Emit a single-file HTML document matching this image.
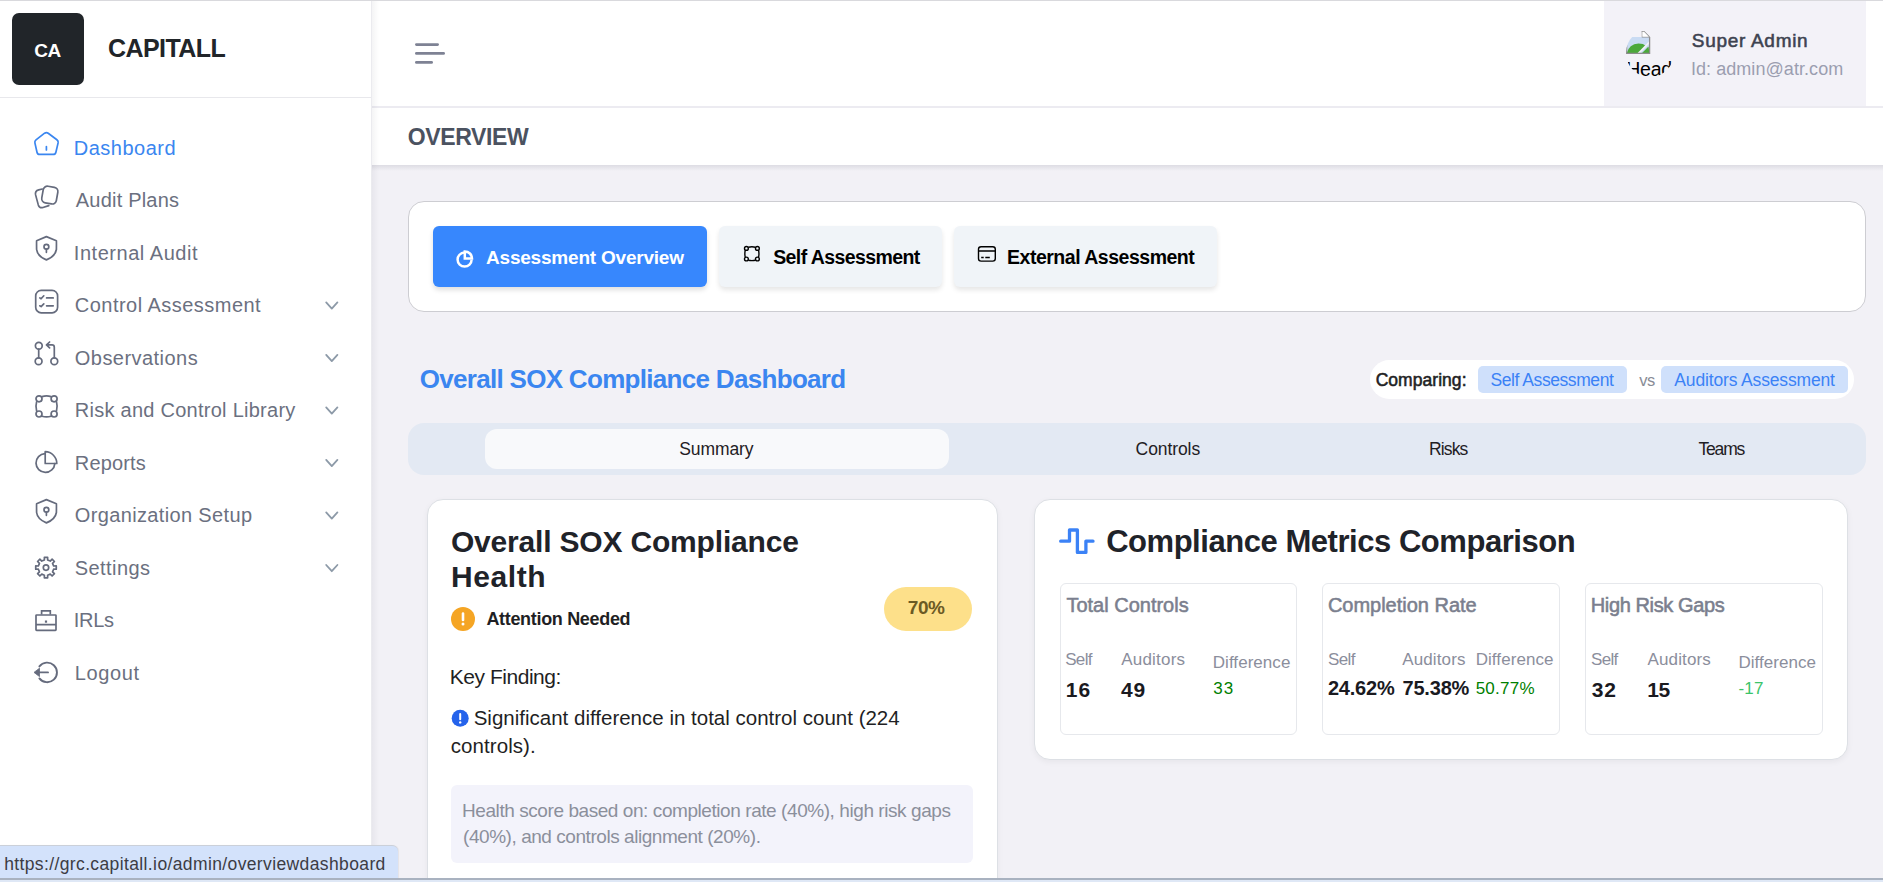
<!DOCTYPE html>
<html><head><meta charset="utf-8"><title>Overview Dashboard</title>
<style>
*{box-sizing:border-box;margin:0;padding:0}
html,body{width:1883px;height:882px;overflow:hidden}
body{background:#f2f1f6;font-family:"Liberation Sans",sans-serif;position:relative}
.abs{position:absolute}
.t{position:absolute;white-space:nowrap;line-height:1}
</style></head><body>

<div class="abs" style="left:0;top:0;width:372px;height:882px;background:#fff;border-right:1px solid #ebebef"></div>
<div class="abs" style="left:12px;top:13px;width:72px;height:72px;background:#212529;border-radius:7px"></div>
<div class="abs" style="left:0;top:97px;width:371px;height:1px;background:#e8e8ec"></div>
<div class="abs" style="left:372px;top:0;width:1511px;height:106px;background:#fff"></div>
<div class="abs" style="left:372px;top:106px;width:1511px;height:1.5px;background:#ecebf1"></div>
<div class="abs" style="left:1604px;top:0;width:262px;height:106px;background:#f3f2f8"></div>
<div class="abs" style="left:372px;top:107.5px;width:1511px;height:57.5px;background:#fff"></div>
<div class="abs" style="left:372px;top:165px;width:1511px;height:6px;background:linear-gradient(to bottom,rgba(0,0,30,0.085),rgba(0,0,30,0))"></div>
<div class="abs" style="left:372px;top:0;width:7px;height:882px;background:linear-gradient(to right,rgba(0,0,30,0.045),rgba(0,0,30,0))"></div>
<div class="abs" style="left:0;top:0;width:1883px;height:1px;background:#d9d9dd"></div>
<svg class="abs" style="left:405px;top:30px" width="60" height="50" viewBox="0 0 60 50" ><g stroke="#7e8294" stroke-width="2.8" stroke-linecap="round"><path d="M11.4 14.6 H32.6"/><path d="M11.4 23.4 H38.6"/><path d="M11.4 32.4 H26.6"/></g></svg>
<!-- broken image -->
<div class="abs" style="left:1626px;top:29px;width:48px;height:48px;border-radius:50%;overflow:hidden">
<svg class="abs" style="left:0;top:0" width="48" height="48" viewBox="0 0 48 48"><path d="M0.6 24.6 V8 H16.3 L23.6 8 V24.6 Z" fill="#c9dbf3"/><path d="M0.6 24.6 Q3 15 12.5 14.6 Q17.5 14.6 20 17 L13 24.6 Z" fill="#4ba83a"/><path d="M15.6 24.6 L22.5 17.5 L23.6 24.6 Z" fill="#4ba83a"/><path d="M12 24.8 L24 12.6" stroke="#f3f2f8" stroke-width="1.8"/><path d="M0.6 16 V24.4 H23.6 V8.2 L18 2.6 H15.6 M16.4 2.8 V7.8 H23.4" fill="none" stroke="#8c8c8c" stroke-width="1.3"/><path d="M16.3 2.8 H18 L23.4 8.2 V7.8 H16.3 Z" fill="#fff"/></svg>
<div class="t" style="left:0.2px;top:30.6px;font-size:19.5px;color:#000;letter-spacing:-0.2px">Header</div></div>

<div class="abs" style="left:408px;top:201px;width:1458px;height:111px;background:#fff;border:1px solid #cdcdd2;border-radius:16px"></div>
<div class="abs" style="left:433px;top:226px;width:274px;height:61px;background:#3787fd;border-radius:6px;box-shadow:0 3px 5px rgba(0,0,0,0.13)"></div>
<div class="abs" style="left:719px;top:226px;width:223px;height:61px;background:#f0f4f8;border-radius:6px;box-shadow:0 3px 5px rgba(0,0,0,0.10)"></div>
<div class="abs" style="left:954px;top:226px;width:263px;height:61px;background:#f0f4f8;border-radius:6px;box-shadow:0 3px 5px rgba(0,0,0,0.10)"></div>
<svg class="abs" style="left:453px;top:247px" width="24" height="24" viewBox="0 0 24 24" ><g fill="none" stroke="#fff" stroke-width="2.5"><path d="M11.4 5.6 A7 7 0 1 0 18.6 12.7"/><path d="M11.8 4.4 V11.6 H19 A7.2 7.2 0 0 0 11.8 4.4 Z"/></g></svg>
<svg class="abs" style="left:740px;top:242px" width="24" height="24" viewBox="0 0 24 24" ><g fill="none" stroke="#000" stroke-width="1.4"><circle cx="6.4" cy="6.4" r="1.9"/><circle cx="17.4" cy="6.4" r="1.9"/><circle cx="6.4" cy="17" r="1.9"/><circle cx="17.4" cy="17" r="1.9"/><path d="M8.3 5.2 Q11.9 4.4 15.5 5.2 M8.3 18.2 Q11.9 19 15.5 18.2 M5.2 8.3 Q4.5 11.7 5.2 15.1 M18.6 8.3 Q19.3 11.7 18.6 15.1"/></g></svg>
<svg class="abs" style="left:975px;top:243px" width="24" height="24" viewBox="0 0 24 24" ><g fill="none" stroke="#000" stroke-width="1.4"><rect x="3.5" y="3.7" width="16.8" height="14.4" rx="2.6"/><path d="M3.5 8 H20.3 M6.2 14.5 H8.7 M10.3 14.5 H14.8"/></g></svg>

<div class="abs" style="left:1370px;top:360px;width:484px;height:39px;background:#fff;border-radius:20px"></div>
<div class="abs" style="left:1478px;top:366px;width:149px;height:27px;background:#cfe0fb;border-radius:5px"></div>
<div class="abs" style="left:1661px;top:366px;width:187px;height:27px;background:#cfe0fb;border-radius:5px"></div>

<div class="abs" style="left:408px;top:423px;width:1458px;height:52px;background:#e3e9f3;border-radius:16px"></div>
<div class="abs" style="left:485px;top:429px;width:463.5px;height:40px;background:#f8f9fb;border-radius:12px"></div>

<div class="abs" style="left:427px;top:499px;width:570.5px;height:420px;background:#fff;border:1px solid #dde0e5;border-radius:16px;box-shadow:0 2px 6px rgba(0,0,0,0.05)"></div>
<div class="abs" style="left:884px;top:587px;width:88px;height:44px;background:#fde08a;border-radius:22px"></div>
<svg class="abs" style="left:450px;top:606px" width="26" height="26" viewBox="0 0 26 26"><circle cx="13" cy="13" r="12" fill="#f5a524"/><path d="M13 7.5 V14" stroke="#fff" stroke-width="2.6" stroke-linecap="round"/><circle cx="13" cy="18" r="1.5" fill="#fff"/></svg>
<svg class="abs" style="left:451px;top:709px" width="19" height="19" viewBox="0 0 19 19"><circle cx="9.2" cy="9.3" r="8.5" fill="#2563eb"/><path d="M9.2 5 V10.2" stroke="#fff" stroke-width="2" stroke-linecap="round"/><circle cx="9.2" cy="13.4" r="1.2" fill="#fff"/></svg>
<div class="abs" style="left:451px;top:785px;width:522px;height:78px;background:#f3f3fb;border-radius:6px"></div>

<div class="abs" style="left:1034px;top:499px;width:814px;height:260.5px;background:#fff;border:1px solid #dde0e5;border-radius:16px;box-shadow:0 2px 6px rgba(0,0,0,0.05)"></div>
<svg class="abs" style="left:1055px;top:524px" width="44" height="34" viewBox="0 0 44 34" ><path d="M5.7 17.2 H14.5 V6 H22.4 V28.4 H30.9 V17.2 H38" fill="none" stroke="#3b82f6" stroke-width="3.3" stroke-linejoin="round" stroke-linecap="round"/></svg>
<div class="abs" style="left:1059.5px;top:583px;width:237.5px;height:152px;border:1px solid #e6e8ec;border-radius:6px"></div>
<div class="abs" style="left:1321.5px;top:583px;width:238px;height:152px;border:1px solid #e6e8ec;border-radius:6px"></div>
<div class="abs" style="left:1584.5px;top:583px;width:238.5px;height:152px;border:1px solid #e6e8ec;border-radius:6px"></div>

<div class="abs" style="left:0;top:845px;width:398px;height:33px;background:#d3e2fb;border-top:1px solid #cbd0d9;border-top-right-radius:6px;box-shadow:1px 0 1px rgba(0,0,0,0.06)"></div>
<div class="abs" style="left:0;top:878px;width:1883px;height:2px;background:#a9b2c0"></div>
<div class="abs" style="left:0;top:880px;width:1883px;height:2px;background:#dfe8f6"></div>

<svg class="abs" style="left:28px;top:128px" width="36" height="36" viewBox="0 0 36 36" ><g fill="none" stroke="#3a86f0" stroke-width="1.7" stroke-linecap="round" stroke-linejoin="round"><path d="M16.6 5.2 Q18.4 3.9 20.2 5.2 L28.9 11.8 Q30.5 13 30.1 14.9 L27.9 24.2 Q27.4 26.4 25.1 26.4 L11.7 26.4 Q9.5 26.4 9 24.2 L6.9 14.9 Q6.5 13 8 11.8 Z"/><path d="M18.4 18.7 V22"/></g></svg><svg class="abs" style="left:28px;top:180px" width="36" height="36" viewBox="0 0 36 36" ><g fill="none" stroke="#656b7d" stroke-width="1.7" stroke-linecap="round" stroke-linejoin="round"><rect x="14.4" y="6.7" width="14.8" height="16.8" rx="4.2" transform="rotate(10 21.8 15.1)"/><path d="M14.3 9 L10.7 9.9 Q6.7 11 7.6 14.9 L10.3 24.9 Q11.4 28.4 15 27.5 L20.8 25.6"/></g></svg><svg class="abs" style="left:28px;top:232px" width="36" height="36" viewBox="0 0 36 36" ><g fill="none" stroke="#656b7d" stroke-width="1.7" stroke-linecap="round" stroke-linejoin="round"><path d="M18.4 4.6 L8.6 8.7 Q8.5 9 8.6 17.5 Q9.4 24.2 18.4 27.9 Q27.4 24.2 28.4 17.5 Q28.5 9 28.4 8.7 Z"/><circle cx="18.4" cy="14.7" r="2.4"/><path d="M18.4 17.1 V20.3"/></g></svg><svg class="abs" style="left:28px;top:285px" width="36" height="36" viewBox="0 0 36 36" ><g fill="none" stroke="#656b7d" stroke-width="1.7" stroke-linecap="round" stroke-linejoin="round"><rect x="7.7" y="5.4" width="21.9" height="22.4" rx="5.5"/><path d="M11.8 12.9 L13.1 13.8 L15.8 10.8 M18.6 12.9 H25.2 M11.8 20.8 L13.1 21.6 L15.8 18.8 M18.6 20.8 H25.2"/></g></svg><svg class="abs" style="left:28px;top:338px" width="36" height="36" viewBox="0 0 36 36" ><g fill="none" stroke="#656b7d" stroke-width="1.7" stroke-linecap="round" stroke-linejoin="round"><circle cx="10.8" cy="7.8" r="3.4"/><circle cx="10.6" cy="23.3" r="3.4"/><circle cx="26.3" cy="23.3" r="3.4"/><path d="M10.7 11.2 V19.9 M26.3 19.9 V9.2 Q26.3 6.9 24 6.9 H18.5 M21.6 4 L18.5 6.9 L21.6 9.8"/></g></svg><svg class="abs" style="left:28px;top:390px" width="36" height="36" viewBox="0 0 36 36" ><g fill="none" stroke="#656b7d" stroke-width="1.7" stroke-linecap="round" stroke-linejoin="round"><circle cx="11" cy="8.8" r="3"/><circle cx="26.1" cy="8.8" r="3"/><circle cx="11" cy="24" r="3"/><circle cx="26.1" cy="24" r="3"/><path d="M14 6.6 Q18.5 5.2 23.1 6.6 M14 26.3 Q18.5 27.6 23.1 26.3 M8.6 11.8 Q7.3 16.4 8.6 21 M28.5 11.8 Q29.8 16.4 28.5 21"/></g></svg><svg class="abs" style="left:28px;top:443px" width="36" height="36" viewBox="0 0 36 36" ><g fill="none" stroke="#656b7d" stroke-width="1.7" stroke-linecap="round" stroke-linejoin="round"><path d="M16.9 10.6 A9.4 9.4 0 1 0 26.8 20.6"/><path d="M17.2 8.7 V20.5 H28.8 A11.8 11.8 0 0 0 17.2 8.7 Z"/></g></svg><svg class="abs" style="left:28px;top:495px" width="36" height="36" viewBox="0 0 36 36" ><g fill="none" stroke="#656b7d" stroke-width="1.7" stroke-linecap="round" stroke-linejoin="round"><path d="M18.4 4.6 L8.6 8.7 Q8.5 9 8.6 17.5 Q9.4 24.2 18.4 27.9 Q27.4 24.2 28.4 17.5 Q28.5 9 28.4 8.7 Z"/><circle cx="18.4" cy="14.7" r="2.4"/><path d="M18.4 17.1 V20.3"/></g></svg><svg class="abs" style="left:28px;top:548px" width="36" height="36" viewBox="0 0 36 36" ><g fill="none" stroke="#656b7d" stroke-width="1.7" stroke-linecap="round" stroke-linejoin="round"><path d="M16.38 11.97 L16.37 9.33 L19.63 9.33 L19.62 11.97 L22.25 13.06 L24.11 11.19 L26.41 13.49 L24.54 15.35 L25.63 17.98 L28.27 17.97 L28.27 21.23 L25.63 21.22 L24.54 23.85 L26.41 25.71 L24.11 28.01 L22.25 26.14 L19.62 27.23 L19.63 29.87 L16.37 29.87 L16.38 27.23 L13.75 26.14 L11.89 28.01 L9.59 25.71 L11.46 23.85 L10.37 21.22 L7.73 21.23 L7.73 17.97 L10.37 17.98 L11.46 15.35 L9.59 13.49 L11.89 11.19 L13.75 13.06 Z"/><circle cx="18" cy="19.6" r="2.7"/></g></svg><svg class="abs" style="left:28px;top:600px" width="36" height="36" viewBox="0 0 36 36" ><g fill="none" stroke="#656b7d" stroke-width="1.7"><rect x="8" y="15" width="20" height="15.3" rx="0.6"/><path d="M13.6 14.6 V10.9 H22.3 V14.6 M8 24.7 H28"/></g><rect x="16.9" y="20.5" width="2.2" height="2.2" fill="#656b7d"/></svg><svg class="abs" style="left:28px;top:653px" width="36" height="36" viewBox="0 0 36 36" ><g fill="none" stroke="#656b7d" stroke-width="1.9" stroke-linecap="round" stroke-linejoin="round"><path d="M11.4 13.4 A9.8 9.8 0 1 1 11.4 25.4"/><path d="M20 19.4 H9"/></g><path d="M6 19.4 L11.5 15.2 L11.5 23.6 Z" fill="#656b7d" stroke="#656b7d" stroke-width="0.8" stroke-linejoin="round"/></svg>
<svg class="abs" style="left:322px;top:298px" width="18" height="16" viewBox="0 0 18 16" ><path d="M4.2 4.40 L9.8 10.60 L15.4 4.40" fill="none" stroke="#8d9aa8" stroke-width="1.8" stroke-linecap="round" stroke-linejoin="round"/></svg><svg class="abs" style="left:322px;top:350px" width="18" height="16" viewBox="0 0 18 16" ><path d="M4.2 4.90 L9.8 11.10 L15.4 4.90" fill="none" stroke="#8d9aa8" stroke-width="1.8" stroke-linecap="round" stroke-linejoin="round"/></svg><svg class="abs" style="left:322px;top:403px" width="18" height="16" viewBox="0 0 18 16" ><path d="M4.2 4.40 L9.8 10.60 L15.4 4.40" fill="none" stroke="#8d9aa8" stroke-width="1.8" stroke-linecap="round" stroke-linejoin="round"/></svg><svg class="abs" style="left:322px;top:455px" width="18" height="16" viewBox="0 0 18 16" ><path d="M4.2 4.90 L9.8 11.10 L15.4 4.90" fill="none" stroke="#8d9aa8" stroke-width="1.8" stroke-linecap="round" stroke-linejoin="round"/></svg><svg class="abs" style="left:322px;top:508px" width="18" height="16" viewBox="0 0 18 16" ><path d="M4.2 4.40 L9.8 10.60 L15.4 4.40" fill="none" stroke="#8d9aa8" stroke-width="1.8" stroke-linecap="round" stroke-linejoin="round"/></svg><svg class="abs" style="left:322px;top:560px" width="18" height="16" viewBox="0 0 18 16" ><path d="M4.2 5.00 L9.8 11.20 L15.4 5.00" fill="none" stroke="#8d9aa8" stroke-width="1.8" stroke-linecap="round" stroke-linejoin="round"/></svg>
<div class="t" id="ca" style="left:34.16px;top:41.00px;font-size:19px;font-weight:700;color:#ffffff;letter-spacing:-0.400px">CA</div>
<div class="t" id="brand" style="left:107.90px;top:36.00px;font-size:25px;font-weight:700;color:#212529;letter-spacing:-0.543px">CAPITALL</div>
<div class="t" id="n1" style="left:73.80px;top:138.00px;font-size:20px;font-weight:400;color:#3a86f0;letter-spacing:0.500px">Dashboard</div>
<div class="t" id="n2" style="left:75.80px;top:190.00px;font-size:20px;font-weight:400;color:#6b7080;letter-spacing:0.200px">Audit Plans</div>
<div class="t" id="n3" style="left:73.80px;top:243.00px;font-size:20px;font-weight:400;color:#6b7080;letter-spacing:0.538px">Internal Audit</div>
<div class="t" id="n4" style="left:74.80px;top:295.00px;font-size:20px;font-weight:400;color:#6b7080;letter-spacing:0.471px">Control Assessment</div>
<div class="t" id="n5" style="left:74.80px;top:348.00px;font-size:20px;font-weight:400;color:#6b7080;letter-spacing:0.455px">Observations</div>
<div class="t" id="n6" style="left:74.80px;top:400.00px;font-size:20px;font-weight:400;color:#6b7080;letter-spacing:0.261px">Risk and Control Library</div>
<div class="t" id="n7" style="left:74.80px;top:453.00px;font-size:20px;font-weight:400;color:#6b7080;letter-spacing:0.167px">Reports</div>
<div class="t" id="n8" style="left:74.80px;top:505.00px;font-size:20px;font-weight:400;color:#6b7080;letter-spacing:0.353px">Organization Setup</div>
<div class="t" id="n9" style="left:74.80px;top:558.00px;font-size:20px;font-weight:400;color:#6b7080;letter-spacing:0.429px">Settings</div>
<div class="t" id="n10" style="left:73.80px;top:610.00px;font-size:20px;font-weight:400;color:#6b7080;letter-spacing:-0.333px">IRLs</div>
<div class="t" id="n11" style="left:74.80px;top:663.00px;font-size:20px;font-weight:400;color:#6b7080;letter-spacing:0.600px">Logout</div>
<div class="t" id="uname" style="left:1691.86px;top:31.00px;font-size:19px;font-weight:400;color:#3d4350;letter-spacing:0.700px;-webkit-text-stroke:0.55px #3d4350">Super Admin</div>
<div class="t" id="uid" style="left:1690.92px;top:60.00px;font-size:18px;font-weight:400;color:#9b9eb0;letter-spacing:0.062px">Id: admin@atr.com</div>
<div class="t" id="ov" style="left:407.72px;top:126.00px;font-size:23px;font-weight:700;color:#4b5260;letter-spacing:-0.371px">OVERVIEW</div>
<div class="t" id="b1t" style="left:486.06px;top:248.00px;font-size:19px;font-weight:700;color:#ffffff;letter-spacing:-0.211px">Assessment Overview</div>
<div class="t" id="b2t" style="left:773.13px;top:248.00px;font-size:19.5px;font-weight:700;color:#000000;letter-spacing:-0.586px">Self Assessment</div>
<div class="t" id="b3t" style="left:1007.03px;top:248.00px;font-size:19.5px;font-weight:700;color:#000000;letter-spacing:-0.489px">External Assessment</div>
<div class="t" id="dt" style="left:419.64px;top:366.00px;font-size:26px;font-weight:700;color:#3b86f0;letter-spacing:-0.690px">Overall SOX Compliance Dashboard</div>
<div class="t" id="cmp" style="left:1375.65px;top:372.00px;font-size:17.5px;font-weight:400;color:#1f1f24;letter-spacing:0.044px;-webkit-text-stroke:0.55px #1f1f24">Comparing:</div>
<div class="t" id="cs" style="left:1490.45px;top:372.00px;font-size:17.5px;font-weight:400;color:#3b82f6;letter-spacing:-0.429px">Self Assessment</div>
<div class="t" id="cvs" style="left:1639.25px;top:372.00px;font-size:16.5px;font-weight:400;color:#888c96;letter-spacing:-0.600px">vs</div>
<div class="t" id="ca2" style="left:1674.35px;top:372.00px;font-size:17.5px;font-weight:400;color:#3b82f6;letter-spacing:-0.156px">Auditors Assessment</div>
<div class="t" id="tab1" style="left:679.22px;top:441.00px;font-size:17.5px;font-weight:400;color:#1f2024;letter-spacing:-0.100px">Summary</div>
<div class="t" id="tab2" style="left:1135.62px;top:441.00px;font-size:17.5px;font-weight:400;color:#1f2024;letter-spacing:-0.086px">Controls</div>
<div class="t" id="tab3" style="left:1428.92px;top:441.00px;font-size:17.5px;font-weight:400;color:#1f2024;letter-spacing:-0.850px">Risks</div>
<div class="t" id="tab4" style="left:1698.42px;top:441.00px;font-size:17.5px;font-weight:400;color:#1f2024;letter-spacing:-1.150px">Teams</div>
<div class="t" id="h1" style="left:450.90px;top:527.00px;font-size:30px;font-weight:700;color:#1f2329;letter-spacing:-0.181px">Overall SOX Compliance</div>
<div class="t" id="h2" style="left:450.90px;top:562.00px;font-size:30px;font-weight:700;color:#1f2329;letter-spacing:0.600px">Health</div>
<div class="t" id="att" style="left:486.42px;top:610.00px;font-size:18px;font-weight:700;color:#1f1f24;letter-spacing:-0.320px">Attention Needed</div>
<div class="t" id="pct" style="left:907.86px;top:598.00px;font-size:19px;font-weight:700;color:#6b5a24;letter-spacing:-0.500px">70%</div>
<div class="t" id="kf" style="left:449.84px;top:666.00px;font-size:21px;font-weight:400;color:#1f1f24;letter-spacing:-0.473px">Key Finding:</div>
<div class="t" id="sig" style="left:473.67px;top:708.00px;font-size:20.5px;font-weight:400;color:#1f1f24;letter-spacing:0.004px">Significant difference in total control count (224</div>
<div class="t" id="sig2" style="left:450.77px;top:736.00px;font-size:20.5px;font-weight:400;color:#1f1f24;letter-spacing:0.067px">controls).</div>
<div class="t" id="hs1" style="left:462.06px;top:801.00px;font-size:19px;font-weight:400;color:#8b8f9b;letter-spacing:-0.431px">Health score based on: completion rate (40%), high risk gaps</div>
<div class="t" id="hs2" style="left:463.06px;top:827.00px;font-size:19px;font-weight:400;color:#8b8f9b;letter-spacing:-0.451px">(40%), and controls alignment (20%).</div>
<div class="t" id="cm" style="left:1106.14px;top:526.00px;font-size:31px;font-weight:700;color:#1f2329;letter-spacing:-0.457px">Compliance Metrics Comparison</div>
<div class="t" id="m1t" style="left:1066.40px;top:595.00px;font-size:20px;font-weight:400;color:#7b7f8e;letter-spacing:-0.000px;-webkit-text-stroke:0.55px #7b7f8e">Total Controls</div>
<div class="t" id="m1s" style="left:1065.18px;top:651.00px;font-size:17px;font-weight:400;color:#8b8e9c;letter-spacing:-0.667px">Self</div>
<div class="t" id="m1a" style="left:1121.28px;top:651.00px;font-size:17px;font-weight:400;color:#8b8e9c;letter-spacing:0.200px">Auditors</div>
<div class="t" id="m1d" style="left:1212.78px;top:654.00px;font-size:17px;font-weight:400;color:#8b8e9c;letter-spacing:0.044px">Difference</div>
<div class="t" id="m1v1" style="left:1065.74px;top:679.00px;font-size:21px;font-weight:700;color:#1a1a1f;letter-spacing:1.000px">16</div>
<div class="t" id="m1v2" style="left:1121.04px;top:679.00px;font-size:21px;font-weight:700;color:#1a1a1f;letter-spacing:0.800px">49</div>
<div class="t" id="m1v3" style="left:1213.18px;top:680.00px;font-size:17px;font-weight:400;color:#008000;letter-spacing:1.200px">33</div>
<div class="t" id="m2t" style="left:1327.90px;top:595.00px;font-size:20px;font-weight:400;color:#7b7f8e;letter-spacing:-0.014px;-webkit-text-stroke:0.55px #7b7f8e">Completion Rate</div>
<div class="t" id="m2s" style="left:1328.08px;top:651.00px;font-size:17px;font-weight:400;color:#8b8e9c;letter-spacing:-0.667px">Self</div>
<div class="t" id="m2a" style="left:1402.28px;top:651.00px;font-size:17px;font-weight:400;color:#8b8e9c;letter-spacing:0.114px">Auditors</div>
<div class="t" id="m2d" style="left:1475.68px;top:651.00px;font-size:17px;font-weight:400;color:#8b8e9c;letter-spacing:0.067px">Difference</div>
<div class="t" id="m2v1" style="left:1327.90px;top:678.00px;font-size:20px;font-weight:700;color:#1a1a1f;letter-spacing:-0.200px">24.62%</div>
<div class="t" id="m2v2" style="left:1402.50px;top:678.00px;font-size:20px;font-weight:700;color:#1a1a1f;letter-spacing:-0.200px">75.38%</div>
<div class="t" id="m2v3" style="left:1475.68px;top:680.00px;font-size:17px;font-weight:400;color:#008000;letter-spacing:0.240px">50.77%</div>
<div class="t" id="m3t" style="left:1590.80px;top:595.00px;font-size:20px;font-weight:400;color:#7b7f8e;letter-spacing:-0.385px;-webkit-text-stroke:0.55px #7b7f8e">High Risk Gaps</div>
<div class="t" id="m3s" style="left:1590.98px;top:651.00px;font-size:17px;font-weight:400;color:#8b8e9c;letter-spacing:-0.667px">Self</div>
<div class="t" id="m3a" style="left:1647.58px;top:651.00px;font-size:17px;font-weight:400;color:#8b8e9c;letter-spacing:0.114px">Auditors</div>
<div class="t" id="m3d" style="left:1738.48px;top:654.00px;font-size:17px;font-weight:400;color:#8b8e9c;letter-spacing:0.044px">Difference</div>
<div class="t" id="m3v1" style="left:1591.74px;top:679.00px;font-size:21px;font-weight:700;color:#1a1a1f;letter-spacing:0.800px">32</div>
<div class="t" id="m3v2" style="left:1647.14px;top:679.00px;font-size:21px;font-weight:700;color:#1a1a1f;letter-spacing:-0.200px">15</div>
<div class="t" id="m3v3" style="left:1738.48px;top:680.00px;font-size:17px;font-weight:400;color:#3cc46a;letter-spacing:0.200px">-17</div>
<div class="t" id="url" style="left:4.15px;top:856.00px;font-size:17.5px;font-weight:400;color:#3c3c44;letter-spacing:0.378px">https://grc.capitall.io/admin/overviewdashboard</div>
</body></html>
